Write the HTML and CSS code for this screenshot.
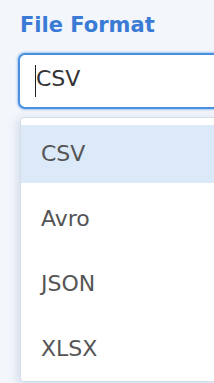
FILE: index.html
```html
<!doctype html>
<html lang="en">
<head>
  <meta charset="UTF-8">
  <meta name="viewport" content="width=device-width, initial-scale=1">
  <title>File Format</title>
  <link rel="stylesheet" href="styles.css">
</head>
<body>
  <div class="field">
    <label class="field-label">File Format</label>
    <div class="select-input">
      <span class="caret"></span>
      <span class="select-value">CSV</span>
    </div>
    <ul class="select-menu">
      <li class="select-option select-option--active">CSV</li>
      <li class="select-option">Avro</li>
      <li class="select-option">JSON</li>
      <li class="select-option">XLSX</li>
    </ul>
  </div>
</body>
</html>
```

FILE: styles.css
```css
body {
  font-family: 'DejaVu Sans', Verdana, sans-serif;
  margin: 0;
  padding: 0;
  background-color: #f3f6fb;
  overflow: hidden;
  height: 383px;
}

.field {
  padding: 13px 0 0 18px;
  width: 196px;
  height: 370px;
  overflow: hidden;
}

.field-label {
  display: block;
  padding-left: 2px;
  font-size: 21px;
  line-height: 24px;
  font-weight: bold;
  color: #3a7bd5;
  margin-bottom: 16px;
}

.select-input {
  display: flex;
  align-items: center;
  box-sizing: border-box;
  width: 260px;
  height: 56px;
  padding-left: 15px;
  border: 2px solid #4a8fe0;
  border-radius: 7px;
  background: #fff;
  box-shadow: 0 0 2px 1px rgba(74, 143, 224, 0.45);
}

.caret {
  display: inline-block;
  width: 1px;
  height: 32px;
  background: #222;
}

.select-value {
  font-size: 22px;
  line-height: 32px;
  padding-bottom: 5px;
  color: #333;
}

.select-menu {
  list-style: none;
  margin: 8px 0 0 2px;
  padding: 7px 0 0 0;
  width: 240px;
  height: 256px;
  overflow: hidden;
  background: #fff;
  border: 1px solid #d6dde8;
  border-radius: 4px;
  box-shadow: -3px 2px 10px rgba(100, 130, 180, 0.22);
}

.select-option {
  height: 58px;
  line-height: 58px;
  margin-bottom: 7px;
  padding-left: 20px;
  font-size: 22px;
  color: #555;
}

.select-option--active {
  background-color: #dce9f8;
}
```
